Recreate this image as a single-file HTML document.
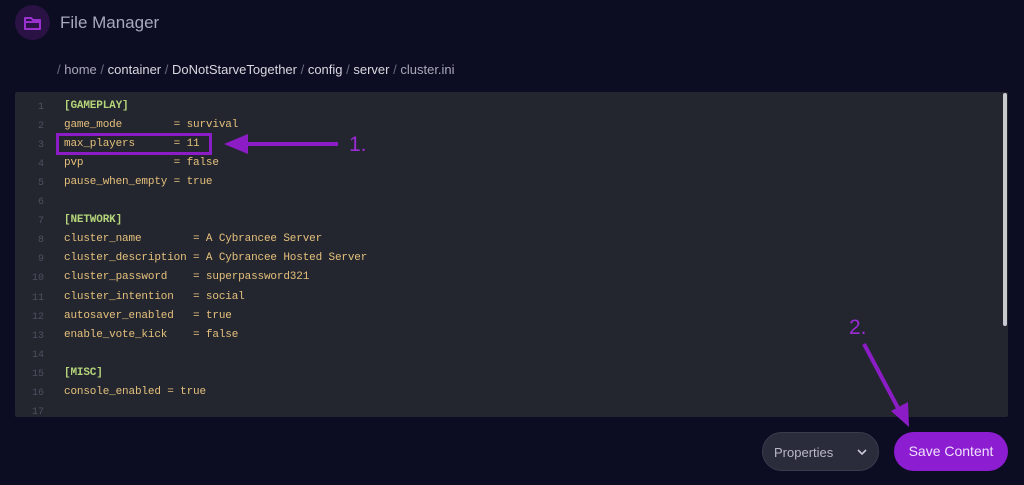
<!DOCTYPE html>
<html><head><style>
body{margin:0;width:1024px;height:485px;background:#0c0d22;font-family:"Liberation Sans",sans-serif;position:relative;overflow:hidden}
.ic{position:absolute;left:15px;top:5px;width:35px;height:35px;border-radius:50%;background:#2a1245}
.title{position:absolute;left:60px;top:13px;color:#a9a9bd;font-size:17px}
.crumb{position:absolute;left:57px;top:62px;font-size:13px;color:#d8d8e0}
.crumb .s{color:#6a6a80}.crumb .g{color:#a8a8b8}
.ed{position:absolute;left:15px;top:92px;width:993px;height:325px;background:#23262f;border-radius:2px}
.ln{position:absolute;left:20px;width:24px;text-align:right;color:#4c5160;font:10px "Liberation Mono",monospace}
.cd{position:absolute;left:64px;color:#e5c07b;font:11px "Liberation Mono",monospace;white-space:pre;letter-spacing:-0.15px}
.cd.h{color:#b5d57a;font-weight:bold}
.sb{position:absolute;left:1003px;top:93px;width:4px;height:233px;background:#c8cad0;border-radius:2px}
.box{position:absolute;left:56px;top:133px;width:150px;height:16px;border:3px solid #8c1dc6}
.btn{position:absolute;top:432px;height:39px;border-radius:20px;font-size:14px;line-height:39px}
.lab{position:absolute;color:#9b2bd6;font-size:21px}
</style></head><body>
<div class="ic"><svg width="35" height="35" viewBox="0 0 35 35"><path d="M10 13h6l2 2h7v9H10z" fill="none" stroke="#9b30d0" stroke-width="2" stroke-linejoin="round"/><path d="M10 17h15" stroke="#9b30d0" stroke-width="2"/></svg></div>
<div class="title">File Manager</div>
<div class="crumb"><span class="s">/</span> <span class="g">home</span> <span class="s">/</span> container <span class="s">/</span> DoNotStarveTogether <span class="s">/</span> config <span class="s">/</span> server <span class="s">/</span> <span class="g">cluster.ini</span></div>
<div class="ed"></div>
<div class="sb"></div>
<div id="code"></div>
<script>
var L=[["[GAMEPLAY]",1],["game_mode        = survival"],["max_players      = 11"],["pvp              = false"],["pause_when_empty = true"],[""],["[NETWORK]",1],["cluster_name        = A Cybrancee Server"],["cluster_description = A Cybrancee Hosted Server"],["cluster_password    = superpassword321"],["cluster_intention   = social"],["autosaver_enabled   = true"],["enable_vote_kick    = false"],[""],["[MISC]",1],["console_enabled = true"],[""]];
var h="";L.forEach(function(l,i){var y=99.5+i*19.1;h+='<div class="ln" style="top:'+(y+2)+'px">'+(i+1)+'</div><div class="cd'+(l[1]?' h':'')+'" style="top:'+y+'px">'+l[0]+'</div>';});
document.getElementById("code").innerHTML=h;
</script>
<div class="box"></div>
<svg style="position:absolute;left:0;top:0" width="1024" height="485">
<path d="M338 144H245" stroke="#8c1dc6" stroke-width="4"/><path d="M224 144L248 134V154Z" fill="#8c1dc6"/>
<path d="M864 344L898 408" stroke="#8c1dc6" stroke-width="4"/><path d="M909 427L891 411L908 402Z" fill="#8c1dc6"/>
</svg>
<div class="lab" style="left:349px;top:133px">1.</div>
<div class="lab" style="left:849px;top:316px">2.</div>
<div class="btn" style="left:762px;width:117px;background:#2a2b3b;color:#b8b8c8;border:1px solid #3a3b4c;box-sizing:border-box"><span style="position:absolute;left:11px;font-size:13px">Properties</span><svg style="position:absolute;left:94px;top:15px" width="10" height="8"><path d="M1 2l4 4 4-4" stroke="#c8c8d8" stroke-width="1.6" fill="none"/></svg></div>
<div class="btn" style="left:894px;width:114px;background:#8c1dd0;color:#f0e0ff;text-align:center">Save Content</div>
</body></html>
